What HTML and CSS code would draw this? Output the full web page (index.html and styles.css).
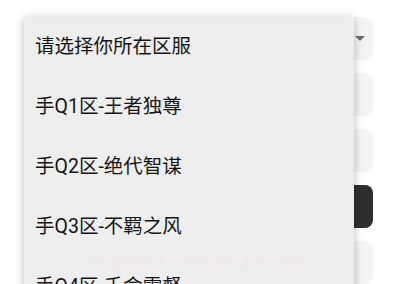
FILE: index.html
```html
<!DOCTYPE html>
<html lang="zh-CN">
<head>
    <meta charset="UTF-8">
    <meta name="viewport" content="width=device-width, initial-scale=1.0">
    <title>选择区服</title>
    <link rel="stylesheet" href="styles.css">
</head>
<body>
    <main class="page">
        <form class="form">
            <div class="field field-select">
                <span class="arrow"></span>
            </div>
            <div class="field"></div>
            <div class="field"></div>
            <button type="button" class="submit"></button>
            <div class="field"></div>
        </form>

        <ul class="menu">
            <li class="menu-item">请选择你所在区服</li>
            <li class="menu-item">手Q1区-王者独尊</li>
            <li class="menu-item">手Q2区-绝代智谋</li>
            <li class="menu-item">手Q3区-不羁之风</li>
            <li class="menu-item">手Q4区-千命需督</li>
        </ul>
        <div class="watermark">手游SSJ • MXSSJ.COM</div>
    </main>
</body>
</html>
```

FILE: styles.css
```css
body {
    margin: 0;
    padding: 0;
    background-color: #ffffff;
    font-family: Roboto, "Noto Sans CJK SC", sans-serif;
    overflow: hidden;
}

.page {
    position: relative;
    height: 284px;
    overflow: hidden;
}

.form {
    display: flex;
    flex-direction: column;
    gap: 13px;
    padding: 17px 20px 0 26px;
}

.field {
    height: 43px;
    background-color: #f4f4f4;
    border-radius: 8px;
    position: relative;
}

.arrow {
    position: absolute;
    right: 8px;
    top: 19px;
    width: 0;
    height: 0;
    border-left: 5px solid transparent;
    border-right: 5px solid transparent;
    border-top: 5px solid #6b6b6b;
}

.submit {
    height: 43px;
    border: none;
    border-radius: 8px;
    background-color: #2e2e2e;
}

.menu {
    position: absolute;
    left: 24px;
    top: 17px;
    width: 330px;
    margin: 0;
    padding: 0;
    list-style: none;
    background-color: #eeeeee;
    box-shadow: 0 2px 10px rgba(0, 0, 0, 0.28);
    border-radius: 2px;
}

.menu-item {
    height: 60px;
    line-height: 60px;
    padding-left: 11px;
    font-size: 19.5px;
    color: #151515;
}

.watermark {
    position: absolute;
    left: 86px;
    top: 246px;
    font-family: "Liberation Sans", "Noto Sans CJK SC", sans-serif;
    font-size: 20px;
    font-weight: bold;
    color: #f2e9f0;
    white-space: nowrap;
}
```
